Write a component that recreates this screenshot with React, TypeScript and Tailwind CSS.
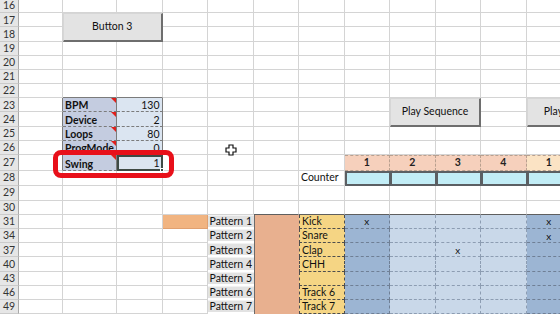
import React from "react";

const ROWS = [16, 17, 18, 19, 20, 21, 22, 23, 24, 25, 26, 27, 28, 29, 30, 31, 34, 37, 40, 43, 46, 49];

const GRID = "border-r border-b border-[#d4d4d4]";

const BPM: Record<number, [string, string]> = {
  23: ["BPM", "130"],
  24: ["Device", "2"],
  25: ["Loops", "80"],
  26: ["ProgMode", "0"],
  27: ["Swing", "1"],
};

const TRACKS: Record<number, string> = {
  31: "Kick",
  34: "Snare",
  37: "Clap",
  40: "CHH",
  43: "",
  46: "Track 6",
  49: "Track 7",
};

const PATTERNS: Record<number, string> = {
  31: "Pattern 1",
  34: "Pattern 2",
  37: "Pattern 3",
  40: "Pattern 4",
  43: "Pattern 5",
  46: "Pattern 6",
  49: "Pattern 7",
};

const MARKS: Record<string, boolean> = {
  "31-8": true,
  "37-10": true,
  "31-12": true,
  "34-12": true,
};

function Tri() {
  return (
    <span className="absolute right-0 top-0 h-0 w-0 border-t-[5px] border-l-[5px] border-t-[#e0201b] border-l-transparent" />
  );
}

function Btn({ label }: { label: string }) {
  return (
    <div className="col-span-2 row-span-2 flex items-center justify-center bg-[#e3e3e3] border border-[#d6d6d6] border-r-2 border-b-2 border-r-[#6e6e6e] border-b-[#6e6e6e] text-[10.5px] text-[#111111] whitespace-nowrap">
      {label}
    </div>
  );
}

function cell(r: number, c: number): React.ReactNode {
  const k = `${r}-${c}`;

  if ((r === 17 || r === 18) && (c === 2 || c === 3)) {
    if (r === 17 && c === 2) return <Btn key={k} label="Button 3" />;
    return null;
  }
  if ((r === 23 || r === 24) && (c === 9 || c === 10)) {
    if (r === 23 && c === 9) return <Btn key={k} label="Play Sequence" />;
    return null;
  }
  if ((r === 23 || r === 24) && (c === 12 || c === 13)) {
    if (r === 23 && c === 12) return <Btn key={k} label="Play Pattern" />;
    return null;
  }

  if (r === 22 && (c === 2 || c === 3)) {
    return <div key={k} className="border-r border-b border-r-[#d4d4d4] border-b-[#7b7b7b]" />;
  }

  if (BPM[r]) {
    if (c === 1) {
      return <div key={k} className="border-r border-b border-r-[#7b7b7b] border-b-[#d4d4d4]" />;
    }
    if (c === 2) {
      return (
        <div
          key={k}
          className="relative flex items-end pl-[2px] bg-[#c4cce0] border-r border-b border-[#7b7b7b] [border-bottom-style:dashed] text-[10.5px] font-bold leading-[11px] text-[#111111] whitespace-nowrap overflow-hidden"
        >
          {BPM[r][0]}
          <Tri />
        </div>
      );
    }
    if (c === 3) {
      if (r === 27) {
        return (
          <div
            key={k}
            className="relative flex items-end justify-end pr-[1px] bg-[#dbe5f1] border-2 border-[#3e4a45] text-[10.5px] leading-[11px] text-[#111111]"
          >
            {BPM[r][1]}
            <span className="absolute right-[-3px] bottom-[-3px] h-[4px] w-[4px] bg-[#3e4a45] border border-white" />
          </div>
        );
      }
      return (
        <div
          key={k}
          className="flex items-end justify-end pr-[2px] bg-[#dbe5f1] border-r border-b border-[#7b7b7b] [border-bottom-style:dashed] text-[10.5px] leading-[11px] text-[#111111]"
        >
          {BPM[r][1]}
        </div>
      );
    }
  }

  if (r === 27 && c >= 8) {
    if (c === 12) {
      return (
        <div
          key={k}
          className="flex items-center justify-center bg-[#fbe3c4] border-r border-b border-t border-dashed border-[#b9a08f] text-[10.5px] font-bold leading-none text-[#222222]"
        >
          1
        </div>
      );
    }
    const n = c === 13 ? 2 : c - 7;
    return (
      <div
        key={k}
        className="flex items-center justify-center bg-[#f6d0bc] border-r border-b border-t border-dashed border-[#b9a08f] text-[10.5px] font-bold leading-none text-[#222222]"
      >
        {n}
      </div>
    );
  }

  if (r === 28) {
    if (c === 7) {
      return (
        <div
          key={k}
          className="flex items-center pl-[2px] border-r border-b border-[#d4d4d4] text-[10.5px] leading-none text-[#111111]"
        >
          Counter
        </div>
      );
    }
    if (c >= 8) {
      return <div key={k} className="bg-[#c2edf6] border-t-2 border-b-2 border-l-2 border-r border-[#5b5f63]" />;
    }
  }

  if (r === 30 && c >= 6) {
    return <div key={k} className="border-r border-b border-r-[#d4d4d4] border-b-[#5f5f5f]" />;
  }

  if (r >= 31) {
    if (c === 4 && r === 31) {
      return <div key={k} className="bg-[#f1b481] border-r border-b border-[#e0a070]" />;
    }
    if (c === 5) {
      return (
        <div
          key={k}
          className="flex items-center justify-center bg-[#e2e2e2] border-b-2 border-b-white border-t border-t-[#f2f2f2] text-[10.5px] leading-none text-[#111111] whitespace-nowrap"
        >
          {PATTERNS[r]}
        </div>
      );
    }
    if (c === 6) {
      if (r === 31) {
        return <div key={k} className="row-span-7 bg-[#e8b08f] border-l border-[#6b6b6b]" />;
      }
      return null;
    }
    if (c === 7) {
      return (
        <div
          key={k}
          className="flex items-center pl-[2px] bg-[#f5d584] border-x border-b border-dashed border-[#4d4d4d] text-[10.5px] leading-none text-[#111111] whitespace-nowrap"
        >
          {TRACKS[r]}
        </div>
      );
    }
    if (c === 8 || c === 12 || c === 13) {
      return (
        <div
          key={k}
          className="flex items-center justify-center bg-[#9cb5d3] border-r border-b border-dashed border-[#6f7f95] text-[10px] leading-none text-[#111111]"
        >
          {MARKS[k] ? "x" : ""}
        </div>
      );
    }
    if (c >= 9 && c <= 11) {
      return (
        <div
          key={k}
          className="flex items-center justify-center bg-[#c9d8e9] border-r border-b border-dashed border-[#8d9db2] text-[10px] leading-none text-[#111111]"
        >
          {MARKS[k] ? "x" : ""}
        </div>
      );
    }
  }

  return <div key={k} className={GRID} />;
}

function Cursor() {
  return (
    <svg className="absolute left-[225px] top-[144px]" width="12" height="12" viewBox="0 0 12 12">
      <polygon
        points="4,1 8,1 8,4 11,4 11,8 8,8 8,11 4,11 4,8 1,8 1,4 4,4"
        fill="#ffffff"
        stroke="#111111"
        strokeWidth="1.2"
      />
    </svg>
  );
}

export default function App() {
  const items: React.ReactNode[] = [];
  ROWS.forEach((r) => {
    items.push(
      <div
        key={`h${r}`}
        className="flex items-center justify-center bg-[#e6e6e6] border-r border-b border-r-[#a9a9a9] border-b-[#cbcbcb] text-[10.5px] leading-none text-[#333333]"
      >
        {r}
      </div>
    );
    for (let c = 1; c <= 13; c++) {
      const el = cell(r, c);
      if (el) items.push(el);
    }
  });

  return (
    <div className="relative h-[314px] w-[560px] overflow-hidden bg-white [font-family:Lato,'Liberation_Sans',sans-serif]">
      <div className="mt-[-1px] grid w-max grid-cols-[19px_44px_54px_repeat(11,45.5px)] grid-rows-[14.3px_repeat(10,14.17px)_15.7px_15.3px_14.7px_14.3px_repeat(7,14.2px)]">
        {items}
      </div>
      <div className="absolute left-[53px] top-[150px] h-[28px] w-[121px] rounded-[8px] border-[5px] border-[#e8101a]" />
      <Cursor />
    </div>
  );
}
